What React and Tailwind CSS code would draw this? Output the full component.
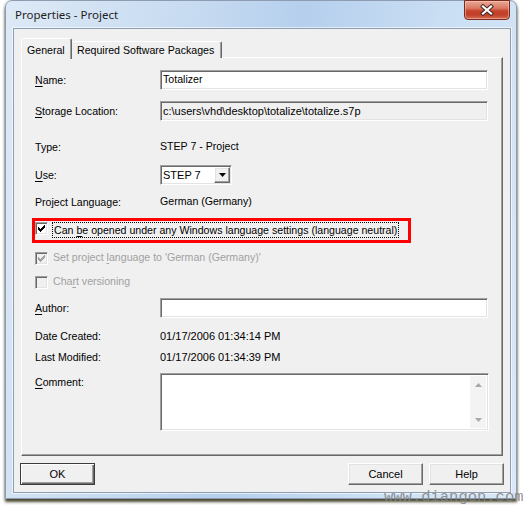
import React from "react";

// Classic Win32 3D edges
const sunken =
  "border border-t-[#a0a0a0] border-l-[#a0a0a0] border-r-white border-b-white shadow-[inset_1px_1px_0_#696969,inset_-1px_-1px_0_#e3e3e3]";
const raised =
  "border border-t-white border-l-white border-r-[#696969] border-b-[#696969] shadow-[inset_-1px_-1px_0_#a0a0a0,inset_1px_1px_0_#e3e3e3]";

function U({ children }) {
  return <span className="underline underline-offset-[2px] decoration-1">{children}</span>;
}

// 7x7 pixel check mark
function CheckMark({ color }) {
  const cols = [2, 3, 4, 3, 2, 1, 0];
  return (
    <svg width="7" height="7" viewBox="0 0 7 7" shapeRendering="crispEdges">
      {cols.map((y, x) => (
        <rect key={x} x={x} y={y} width="1" height="3" fill={color} />
      ))}
    </svg>
  );
}

function Check({ checked, disabled }) {
  return (
    <div
      className={`w-[13px] h-[13px] shrink-0 flex items-center justify-center ${sunken} ${
        disabled ? "bg-[#f0f0f0]" : "bg-white"
      }`}
    >
      {checked && <CheckMark color={disabled ? "#a0a0a0" : "#000"} />}
    </div>
  );
}

function Label({ children }) {
  return <div className="w-[125px] shrink-0 leading-[14px] whitespace-nowrap">{children}</div>;
}

function Row({ className = "", children }) {
  return <div className={`flex items-center pl-[13px] ${className}`}>{children}</div>;
}

function CloseButton() {
  return (
    <div className="-mt-px mr-[6px] w-[46px] h-[20px] rounded-b-[4px] border border-[#7a2b1e] bg-[linear-gradient(to_bottom,#e8a895_0%,#d97a63_40%,#c7422a_55%,#c0402a_75%,#d6694c_100%)] shadow-[inset_0_0_0_1px_rgba(255,220,210,0.45)] flex items-center justify-center">
      <svg width="16" height="12" viewBox="0 0 16 12">
        <path d="M4 2.5 L12 9.5 M12 2.5 L4 9.5" stroke="#4b2a26" strokeWidth="4.2" strokeLinecap="square" />
        <path d="M4 2.5 L12 9.5 M12 2.5 L4 9.5" stroke="#ffffff" strokeWidth="2.2" strokeLinecap="square" />
      </svg>
    </div>
  );
}

function Button({ children, isDefault }) {
  return (
    <div
      className={`w-[75px] h-[22px] bg-[#f0f0f0] flex items-center justify-center text-[11px] ${
        isDefault
          ? "border border-[#3c3c3c] shadow-[inset_1px_1px_0_#ffffff,inset_-1px_-1px_0_#696969,inset_-2px_-2px_0_#a0a0a0]"
          : raised
      }`}
    >
      {children}
    </div>
  );
}

function Arrow({ up }) {
  return (
    <svg width="7" height="4" viewBox="0 0 7 4">
      <path d={up ? "M0 4h7L3.5 0z" : "M0 0h7L3.5 4z"} fill="#a8a8a8" />
    </svg>
  );
}

export default function App() {
  return (
    <div className="relative w-[524px] h-[510px] bg-white overflow-hidden font-['Liberation_Sans',Arial,sans-serif] text-[10.6px] text-black">
      {/* window frame */}
      <div className="ml-[5px] w-[512px] h-[499px] border border-[#8d9cb0] rounded-t-[7px] flex flex-col bg-[linear-gradient(100deg,#dde9f6_0%,#c4d9f0_35%,#b5cfed_50%,#cbdff4_75%,#dae8f7_100%)] shadow-[0_3px_3px_rgba(45,45,18,0.85),0_0_3px_rgba(0,0,0,0.25)]">
        {/* title bar */}
        <div className="h-[27px] shrink-0 flex items-start justify-between">
          <div className="pl-[9px] pt-[6px] text-[11.5px] leading-[16px] text-[#1e1e1e] font-['Noto_Sans',sans-serif]">
            Properties - Project
          </div>
          <CloseButton />
        </div>

        {/* client area */}
        <div className="ml-[7px] w-[498px] border border-[#8e9fb3] bg-[#f0f0f0] px-[7px] pt-[8px] pb-[7px] shadow-[0_0_0_1px_rgba(255,255,255,0.6)]">
          {/* tab strip */}
          <div className="flex items-end h-[21px]">
            <div className="relative z-10 w-[51px] h-[21px] -mb-px bg-[#f0f0f0] border-t border-l border-r border-t-white border-l-white border-r-[#696969] rounded-t-[2px] shadow-[inset_-1px_0_0_#a0a0a0] pl-[5px] pt-[4px] leading-[14px]">
              General
            </div>
            <div className="w-[150px] h-[17px] bg-[#f0f0f0] border-t border-r border-t-white border-r-[#696969] rounded-t-[2px] shadow-[inset_-1px_0_0_#a0a0a0] pl-[5px] pt-[1px] leading-[14px] whitespace-nowrap">
              Required Software Packages
            </div>
          </div>

          {/* tab page */}
          <div className="-mt-px h-[399px] border border-t-white border-l-white border-r-[#696969] border-b-[#696969] shadow-[inset_-1px_-1px_0_#a0a0a0]">
            <Row className="mt-[12px] h-[20px]">
              <Label>
                <U>N</U>ame:
              </Label>
              <div className={`w-[328px] h-[20px] bg-white ${sunken} pl-[2px] flex items-center`}>Totalizer</div>
            </Row>

            <Row className="mt-[11px] h-[20px]">
              <Label>
                <U>S</U>torage Location:
              </Label>
              <div className={`w-[328px] h-[20px] bg-[#f0f0f0] ${sunken} pl-[2px] flex items-center text-[11px]`}>
                c:\users\vhd\desktop\totalize\totalize.s7p
              </div>
            </Row>

            <Row className="mt-[17px] h-[18px]">
              <Label>Type:</Label>
              <div>STEP 7 - Project</div>
            </Row>

            <Row className="mt-[9px] h-[20px]">
              <Label>
                <U>U</U>se:
              </Label>
              <div className={`w-[72px] h-[20px] bg-white ${sunken} flex items-center pl-[2px] pr-px text-[11px]`}>
                <span className="flex-1">STEP 7</span>
                <div className={`w-[16px] h-[16px] bg-[#f0f0f0] ${raised} flex items-center justify-center`}>
                  <svg width="7" height="4" viewBox="0 0 7 4">
                    <path d="M0 0h7L3.5 4z" fill="#000" />
                  </svg>
                </div>
              </div>
            </Row>

            <Row className="mt-[8px] h-[18px]">
              <Label>Project Language:</Label>
              <div>German (Germany)</div>
            </Row>

            {/* highlighted option */}
            <div className="mt-[7px] ml-[10px] w-[379px] h-[25px] border-[3px] border-[#ff0000] flex items-start pt-px">
              <Check checked />
              <div className="ml-[4px] px-px h-[16px] border border-dotted border-black leading-[14px] whitespace-nowrap">
                Can <U>b</U>e opened under any Windows language settings (language neutral)
              </div>
            </div>

            <Row className="mt-[6px] h-[18px] text-[#a0a0a0]">
              <Check checked disabled />
              <div className="ml-[5px] whitespace-nowrap">
                Set project <U>l</U>anguage to 'German (Germany)'
              </div>
            </Row>

            <Row className="mt-[6px] h-[18px] text-[#a0a0a0]">
              <Check disabled />
              <div className="ml-[5px] whitespace-nowrap">
                Cha<U>r</U>t versioning
              </div>
            </Row>

            <Row className="mt-[7px] h-[20px]">
              <Label>
                <U>A</U>uthor:
              </Label>
              <div className={`w-[328px] h-[20px] bg-white ${sunken}`} />
            </Row>

            <Row className="mt-[9px] h-[18px]">
              <Label>Date Created:</Label>
              <div className="text-[11px]">01/17/2006 01:34:14 PM</div>
            </Row>

            <Row className="mt-[3px] h-[18px]">
              <Label>Last Modified:</Label>
              <div className="text-[11px]">01/17/2006 01:34:39 PM</div>
            </Row>

            <div className="mt-[7px] pl-[13px] flex items-start">
              <div className="w-[125px] shrink-0 pt-[2px] leading-[14px]">
                <U>C</U>omment:
              </div>
              <div className={`w-[329px] h-[58px] bg-white ${sunken} flex justify-end p-[2px]`}>
                <div className="w-[16px] h-full bg-[#f3f3f3] flex flex-col justify-between">
                  <div className="h-[17px] flex items-center justify-center">
                    <Arrow up />
                  </div>
                  <div className="h-[17px] flex items-center justify-center">
                    <Arrow />
                  </div>
                </div>
              </div>
            </div>
          </div>

          {/* dialog buttons */}
          <div className="mt-[7px] -mx-px flex items-center">
            <Button isDefault>OK</Button>
            <div className="flex-1" />
            <Button>Cancel</Button>
            <div className="w-[6px]" />
            <Button>Help</Button>
          </div>
        </div>
      </div>

      {/* site watermark */}
      <div className="absolute left-[384px] top-[489px] font-['Liberation_Mono',monospace] text-[15.5px] leading-[16px] text-[#7f7f7f]/85">
        www.diangon.com
      </div>
    </div>
  );
}
